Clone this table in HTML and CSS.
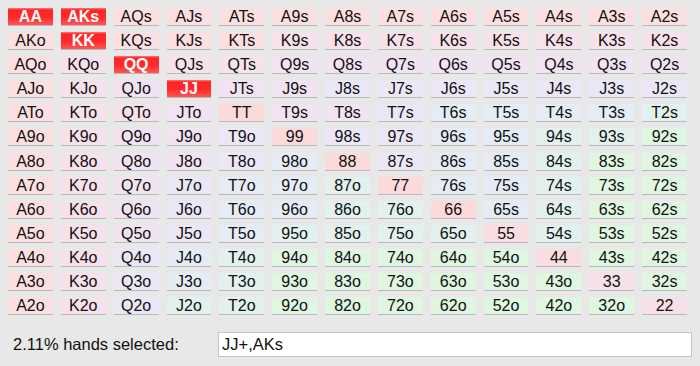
FILE: index.html
```html
<!DOCTYPE html>
<html>
<head>
<meta charset="utf-8">
<link rel="stylesheet" href="styles.css">
</head>
<body>
<div class="grid">
<div class="c sel">AA</div><div class="c sel">AKs</div><div class="c l0">AQs</div><div class="c l0">AJs</div><div class="c l0">ATs</div><div class="c l0">A9s</div><div class="c l0">A8s</div><div class="c l0">A7s</div><div class="c l0">A6s</div><div class="c l0">A5s</div><div class="c l0">A4s</div><div class="c l0">A3s</div><div class="c l0">A2s</div>
<div class="c l0">AKo</div><div class="c sel">KK</div><div class="c l0">KQs</div><div class="c l0">KJs</div><div class="c l0">KTs</div><div class="c l1">K9s</div><div class="c l1">K8s</div><div class="c l1">K7s</div><div class="c l1">K6s</div><div class="c l1">K5s</div><div class="c l1">K4s</div><div class="c l1">K3s</div><div class="c l1">K2s</div>
<div class="c l0">AQo</div><div class="c l1">KQo</div><div class="c sel">QQ</div><div class="c l1">QJs</div><div class="c l1">QTs</div><div class="c l2">Q9s</div><div class="c l2">Q8s</div><div class="c l2">Q7s</div><div class="c l2">Q6s</div><div class="c l2">Q5s</div><div class="c l2">Q4s</div><div class="c l2">Q3s</div><div class="c l2">Q2s</div>
<div class="c l0">AJo</div><div class="c l1">KJo</div><div class="c l2">QJo</div><div class="c sel">JJ</div><div class="c l2">JTs</div><div class="c l2">J9s</div><div class="c l3">J8s</div><div class="c l3">J7s</div><div class="c l3">J6s</div><div class="c l3">J5s</div><div class="c l3">J4s</div><div class="c l3">J3s</div><div class="c l3">J2s</div>
<div class="c l0">ATo</div><div class="c l1">KTo</div><div class="c l1">QTo</div><div class="c l2">JTo</div><div class="c p">TT</div><div class="c l2">T9s</div><div class="c l2">T8s</div><div class="c l3">T7s</div><div class="c l4">T6s</div><div class="c l4">T5s</div><div class="c l4">T4s</div><div class="c l4">T3s</div><div class="c l5">T2s</div>
<div class="c l0">A9o</div><div class="c l1">K9o</div><div class="c l2">Q9o</div><div class="c l2">J9o</div><div class="c l3">T9o</div><div class="c p">99</div><div class="c l3">98s</div><div class="c l3">97s</div><div class="c l4">96s</div><div class="c l4">95s</div><div class="c l5">94s</div><div class="c l5">93s</div><div class="c l6">92s</div>
<div class="c l0">A8o</div><div class="c l1">K8o</div><div class="c l2">Q8o</div><div class="c l2">J8o</div><div class="c l3">T8o</div><div class="c l4">98o</div><div class="c p">88</div><div class="c l3">87s</div><div class="c l4">86s</div><div class="c l4">85s</div><div class="c l5">84s</div><div class="c l6">83s</div><div class="c l6">82s</div>
<div class="c l0">A7o</div><div class="c l1">K7o</div><div class="c l2">Q7o</div><div class="c l3">J7o</div><div class="c l4">T7o</div><div class="c l4">97o</div><div class="c l5">87o</div><div class="c p">77</div><div class="c l4">76s</div><div class="c l4">75s</div><div class="c l5">74s</div><div class="c l6">73s</div><div class="c l6">72s</div>
<div class="c l0">A6o</div><div class="c l1">K6o</div><div class="c l2">Q6o</div><div class="c l3">J6o</div><div class="c l4">T6o</div><div class="c l4">96o</div><div class="c l5">86o</div><div class="c l5">76o</div><div class="c p">66</div><div class="c l4">65s</div><div class="c l5">64s</div><div class="c l6">63s</div><div class="c l6">62s</div>
<div class="c l0">A5o</div><div class="c l1">K5o</div><div class="c l2">Q5o</div><div class="c l3">J5o</div><div class="c l4">T5o</div><div class="c l5">95o</div><div class="c l5">85o</div><div class="c l5">75o</div><div class="c l5">65o</div><div class="c p2">55</div><div class="c l5">54s</div><div class="c l6">53s</div><div class="c l6">52s</div>
<div class="c l0">A4o</div><div class="c l1">K4o</div><div class="c l3">Q4o</div><div class="c l4">J4o</div><div class="c l5">T4o</div><div class="c l6">94o</div><div class="c l6">84o</div><div class="c l6">74o</div><div class="c l6">64o</div><div class="c l6">54o</div><div class="c p2">44</div><div class="c l6">43s</div><div class="c l6">42s</div>
<div class="c l0">A3o</div><div class="c l1">K3o</div><div class="c l3">Q3o</div><div class="c l4">J3o</div><div class="c l5">T3o</div><div class="c l6">93o</div><div class="c l6">83o</div><div class="c l6">73o</div><div class="c l6">63o</div><div class="c l6">53o</div><div class="c l6">43o</div><div class="c p3">33</div><div class="c l6">32s</div>
<div class="c l0">A2o</div><div class="c l1">K2o</div><div class="c l3">Q2o</div><div class="c l5">J2o</div><div class="c l5">T2o</div><div class="c l6">92o</div><div class="c l6">82o</div><div class="c l6">72o</div><div class="c l6">62o</div><div class="c l6">52o</div><div class="c l6">42o</div><div class="c l6">32o</div><div class="c p3">22</div>
</div>
<div class="footer">
<span class="label">2.11% hands selected:</span>
<input class="range" type="text" value="JJ+,AKs">
</div>
</body>
</html>
```
FILE: styles.css
```css
html, body {
  margin: 0;
  padding: 0;
  background: #e8e8e8;
  font-family: "Liberation Sans", Arial, Helvetica, sans-serif;
  color: #111;
}
.grid {
  display: grid;
  grid-template-columns: repeat(13, 1fr);
  column-gap: 8px;
  row-gap: 7.1px;
  width: 679px;
  padding: 8px 0 0 8px;
}
.c {
  height: 17px;
  line-height: 18px;
  font-size: 16px;
  text-align: center;
  box-shadow: 0 1px 0 rgba(0, 0, 0, 0.2);
  white-space: nowrap;
}
.l0 { background: #fbdfe1; }
.l1 { background: #f7e1ea; }
.l2 { background: #f1e3f2; }
.l3 { background: #ebe7f7; }
.l4 { background: #e6ecf6; }
.l5 { background: #e2f1ee; }
.l6 { background: #dff6e1; }
.p { background: #fddada; }
.p2 { background: #fadde1; }
.p3 { background: #f7e0e8; }
.sel {
  background: linear-gradient(to bottom, #ff7a7a 0%, #ff2424 12%, #ff2a2a 55%, #ff5656 100%);
  color: #fff;
  font-weight: bold;
}
.footer {
  display: flex;
  align-items: center;
  margin-top: 17.5px;
  padding-left: 13px;
  height: 25px;
}
.label {
  font-size: 16.5px;
  width: 205px;
}
.range {
  box-sizing: border-box;
  width: 474px;
  height: 25px;
  margin: 0;
  padding: 0 3px;
  border: 1px solid #c4c4c4;
  background: #fff;
  font-family: "Liberation Sans", Arial, Helvetica, sans-serif;
  font-size: 16.5px;
  color: #111;
  outline: none;
}
```
